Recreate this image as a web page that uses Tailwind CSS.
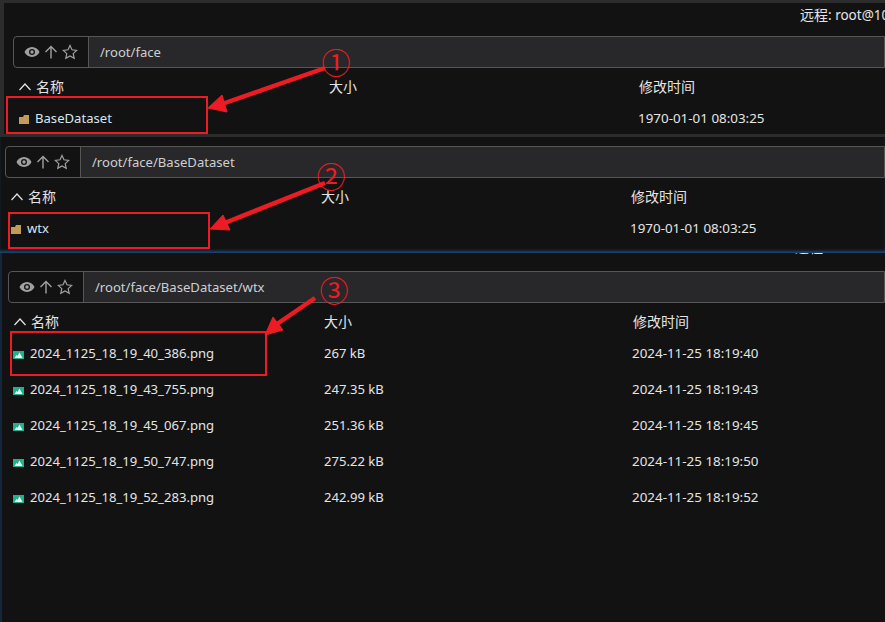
<!DOCTYPE html>
<html>
<head>
<meta charset="utf-8">
<script src="https://cdn.jsdelivr.net/npm/@tailwindcss/browser@4"></script>
</head>
<body class="bg-[#121213]">
<div class="relative w-[885px] h-[622px] overflow-hidden bg-[#121213] text-[#e4e4e6] text-[13.1px] leading-[18px] font-['Noto_Sans','Noto_Sans_CJK_SC',sans-serif]">
  <!-- Panel 1 -->
  <section class="h-[137px] border-t-[3px] border-l-[4px] border-b-[3px] border-[#2c2c2c] pl-[9px]">
    <div class="h-[33px] flex justify-end items-start pt-[3px]"><span class="w-[85px] whitespace-nowrap overflow-hidden text-[13.5px]"><span class="text-[14px]">远程</span>: root@10</span></div>
    <div class="h-[32px] flex border border-[#565656] rounded-l-[4px]">
      <div class="w-[75px] flex items-center justify-center gap-[3px] text-[#a0a0a2] border-r border-[#565656]">
        <svg class="w-[16px] h-[16px]" viewBox="0 0 16 16" fill="currentColor"><path fill-rule="evenodd" d="M8 3C4.500 3 1.700 5.200.5 8c1.200 2.800 4 5 7.500 5s6.300-2.200 7.500-5C14.300 5.200 11.500 3 8 3zm0 8a3 3 0 1 1 0-6 3 3 0 0 1 0 6z"/><circle cx="8" cy="8" r="1.700"/></svg>
        <svg class="w-[16px] h-[16px]" viewBox="0 0 16 16" fill="none" stroke="currentColor" stroke-width="1.400"><path d="M8 14.500V2.500M2.500 8 8 2.500 13.500 8"/></svg>
        <svg class="w-[16px] h-[16px]" viewBox="0 0 16 16" fill="none" stroke="currentColor" stroke-width="1.200"><path d="m8 1.500 2 4.300 4.700.6-3.500 3.200 1 4.700L8 12l-4.200 2.300 1-4.700-3.500-3.200 4.700-.6z"/></svg>
      </div>
      <div class="flex-1 bg-[#28272a] flex items-center pl-[11px] text-[#cfcfd1]">/root/face</div>
    </div>
    <div class="h-[28px] flex items-end pl-[6px]">
      <div class="w-[310px] flex items-center gap-[5px]">
        <svg class="w-[12px] h-[12px]" viewBox="0 0 12 12" fill="none" stroke="#e4e4e6" stroke-width="1.200"><path d="m.5 9 5.500-6 5.500 6"/></svg><span class="text-[14px]">名称</span>
      </div>
      <div class="w-[310px] text-[14px]">大小</div><div class="text-[14px]">修改时间</div>
    </div>
    <div class="h-[38px] pt-[6px] flex items-center pl-[6px]">
      <div class="w-[316px] flex items-center gap-[6px]">
        <svg class="w-[10px] h-[9px] mt-[3px]" viewBox="0 0 10 9"><path fill="#c29b57" d="M0 2h4l1-2h5v9H0z"/></svg><span class="text-[#d7e6f5]">BaseDataset</span>
      </div>
      <div class="w-[303px]"></div><div class="whitespace-nowrap text-[13.4px]">1970-01-01 08:03:25</div>
    </div>
  </section>

  <!-- Panel 2 -->
  <section class="h-[116px] pl-[5px] shadow-[inset_0_-3px_3px_-1px_#1d4a78]">
    <div class="h-[9px]"></div>
    <div class="h-[32px] flex border border-[#565656] rounded-l-[4px]">
      <div class="w-[75px] flex items-center justify-center gap-[3px] text-[#a0a0a2] border-r border-[#565656]">
        <svg class="w-[16px] h-[16px]" viewBox="0 0 16 16" fill="currentColor"><path fill-rule="evenodd" d="M8 3C4.500 3 1.700 5.200.5 8c1.200 2.800 4 5 7.500 5s6.300-2.200 7.500-5C14.300 5.200 11.500 3 8 3zm0 8a3 3 0 1 1 0-6 3 3 0 0 1 0 6z"/><circle cx="8" cy="8" r="1.700"/></svg>
        <svg class="w-[16px] h-[16px]" viewBox="0 0 16 16" fill="none" stroke="currentColor" stroke-width="1.400"><path d="M8 14.500V2.500M2.500 8 8 2.500 13.500 8"/></svg>
        <svg class="w-[16px] h-[16px]" viewBox="0 0 16 16" fill="none" stroke="currentColor" stroke-width="1.200"><path d="m8 1.500 2 4.300 4.700.6-3.500 3.200 1 4.700L8 12l-4.200 2.300 1-4.700-3.500-3.200 4.700-.6z"/></svg>
      </div>
      <div class="flex-1 bg-[#28272a] flex items-center pl-[11px] text-[#cfcfd1]">/root/face/BaseDataset</div>
    </div>
    <div class="h-[28px] flex items-end pl-[6px]">
      <div class="w-[310px] flex items-center gap-[5px]">
        <svg class="w-[12px] h-[12px]" viewBox="0 0 12 12" fill="none" stroke="#e4e4e6" stroke-width="1.200"><path d="m.5 9 5.500-6 5.500 6"/></svg><span class="text-[14px]">名称</span>
      </div>
      <div class="w-[310px] text-[14px]">大小</div><div class="text-[14px]">修改时间</div>
    </div>
    <div class="h-[38px] pt-[6px] flex items-center pl-[6px]">
      <div class="w-[316px] flex items-center gap-[6px]">
        <svg class="w-[10px] h-[9px] mt-[3px]" viewBox="0 0 10 9"><path fill="#c29b57" d="M0 2h4l1-2h5v9H0z"/></svg><span class="text-[#d7e6f5]">wtx</span>
      </div>
      <div class="w-[303px]"></div><div class="whitespace-nowrap text-[13.4px]">1970-01-01 08:03:25</div>
    </div>
  </section>

  <!-- Panel 3 -->
  <section class="border-l-2 border-[#12263c] h-[369px] pl-[6px]">
    <div class="h-[18px]"><div class="h-[3px] overflow-hidden flex justify-end"><span class="w-[90px] whitespace-nowrap -mt-[15px] text-[14px] leading-[18px]">远程: root@10</span></div></div>
    <div class="h-[32px] flex border border-[#565656] rounded-l-[4px]">
      <div class="w-[75px] flex items-center justify-center gap-[3px] text-[#a0a0a2] border-r border-[#565656]">
        <svg class="w-[16px] h-[16px]" viewBox="0 0 16 16" fill="currentColor"><path fill-rule="evenodd" d="M8 3C4.500 3 1.700 5.200.5 8c1.200 2.800 4 5 7.500 5s6.300-2.200 7.500-5C14.300 5.200 11.500 3 8 3zm0 8a3 3 0 1 1 0-6 3 3 0 0 1 0 6z"/><circle cx="8" cy="8" r="1.700"/></svg>
        <svg class="w-[16px] h-[16px]" viewBox="0 0 16 16" fill="none" stroke="currentColor" stroke-width="1.400"><path d="M8 14.500V2.500M2.500 8 8 2.500 13.500 8"/></svg>
        <svg class="w-[16px] h-[16px]" viewBox="0 0 16 16" fill="none" stroke="currentColor" stroke-width="1.200"><path d="m8 1.500 2 4.300 4.700.6-3.500 3.200 1 4.700L8 12l-4.200 2.300 1-4.700-3.500-3.200 4.700-.6z"/></svg>
      </div>
      <div class="flex-1 bg-[#28272a] flex items-center pl-[11px] text-[#cfcfd1]">/root/face/BaseDataset/wtx</div>
    </div>
    <div class="h-[28px] flex items-end pl-[6px]">
      <div class="w-[310px] flex items-center gap-[5px]">
        <svg class="w-[12px] h-[12px]" viewBox="0 0 12 12" fill="none" stroke="#e4e4e6" stroke-width="1.200"><path d="m.5 9 5.500-6 5.500 6"/></svg><span class="text-[14px]">名称</span>
      </div>
      <div class="w-[309px] text-[14px]">大小</div><div class="text-[14px]">修改时间</div>
    </div>
    <div class="mt-[4px] flex flex-col pl-[5px]">
      <div class="h-[36px] flex items-center"><div class="w-[311px] flex items-center gap-[6px]"><svg class="w-[11px] h-[8px] mt-[3px]" viewBox="0 0 11 8"><rect width="11" height="8" fill="#25b08c"/><path fill="#e8fff8" d="m1.500 7 2-3 1 1 2-3.500 3 5.500z"/></svg><span>2024_1125_18_19_40_386.png</span></div><div class="w-[308px]">267 kB</div><div class="text-[13.4px]">2024-11-25 18:19:40</div></div>
      <div class="h-[36px] flex items-center"><div class="w-[311px] flex items-center gap-[6px]"><svg class="w-[11px] h-[8px] mt-[3px]" viewBox="0 0 11 8"><rect width="11" height="8" fill="#25b08c"/><path fill="#e8fff8" d="m1.500 7 2-3 1 1 2-3.500 3 5.500z"/></svg><span>2024_1125_18_19_43_755.png</span></div><div class="w-[308px]">247.35 kB</div><div class="text-[13.4px]">2024-11-25 18:19:43</div></div>
      <div class="h-[36px] flex items-center"><div class="w-[311px] flex items-center gap-[6px]"><svg class="w-[11px] h-[8px] mt-[3px]" viewBox="0 0 11 8"><rect width="11" height="8" fill="#25b08c"/><path fill="#e8fff8" d="m1.500 7 2-3 1 1 2-3.500 3 5.500z"/></svg><span>2024_1125_18_19_45_067.png</span></div><div class="w-[308px]">251.36 kB</div><div class="text-[13.4px]">2024-11-25 18:19:45</div></div>
      <div class="h-[36px] flex items-center"><div class="w-[311px] flex items-center gap-[6px]"><svg class="w-[11px] h-[8px] mt-[3px]" viewBox="0 0 11 8"><rect width="11" height="8" fill="#25b08c"/><path fill="#e8fff8" d="m1.500 7 2-3 1 1 2-3.500 3 5.500z"/></svg><span>2024_1125_18_19_50_747.png</span></div><div class="w-[308px]">275.22 kB</div><div class="text-[13.4px]">2024-11-25 18:19:50</div></div>
      <div class="h-[36px] flex items-center"><div class="w-[311px] flex items-center gap-[6px]"><svg class="w-[11px] h-[8px] mt-[3px]" viewBox="0 0 11 8"><rect width="11" height="8" fill="#25b08c"/><path fill="#e8fff8" d="m1.500 7 2-3 1 1 2-3.500 3 5.500z"/></svg><span>2024_1125_18_19_52_283.png</span></div><div class="w-[308px]">242.99 kB</div><div class="text-[13.4px]">2024-11-25 18:19:52</div></div>
    </div>
  </section>

  <!-- Annotations -->
  <div class="absolute left-[6px] top-[96px] w-[202px] h-[38px] border-[2px] border-[#ed1c24]"></div>
  <div class="absolute left-[8px] top-[212px] w-[202px] h-[37px] border-[2px] border-[#ed1c24]"></div>
  <div class="absolute left-[10px] top-[331px] w-[257px] h-[45px] border-[2px] border-[#ed1c24]"></div>
  <svg class="absolute left-0 top-0" width="885" height="622" viewBox="0 0 885 622">
    <g fill="#ed1c24" stroke="#ed1c24" stroke-linejoin="round">
      <path d="M325 68 222 104" stroke-width="4.500"/><path d="M208 108 222 95 227 112z"/>
      <path d="M325 183 222 224" stroke-width="4.500"/><path d="M210 229 223 215 230 230z"/>
      <path d="M315 298 277 324" stroke-width="4.500"/><path d="M265 335 273 317 283 330z"/>
    </g>
  </svg>
  <div class="absolute left-[316px] top-[41px] w-[40px] h-[40px] flex items-center justify-center text-[#ed1c24] text-[29px] leading-none font-['Noto_Sans_CJK_SC',sans-serif]">①</div>
  <div class="absolute left-[311px] top-[155px] w-[40px] h-[40px] flex items-center justify-center text-[#ed1c24] text-[29px] leading-none font-['Noto_Sans_CJK_SC',sans-serif]">②</div>
  <div class="absolute left-[314px] top-[269px] w-[40px] h-[40px] flex items-center justify-center text-[#ed1c24] text-[29px] leading-none font-['Noto_Sans_CJK_SC',sans-serif]">③</div>
</div>
</body>
</html>
